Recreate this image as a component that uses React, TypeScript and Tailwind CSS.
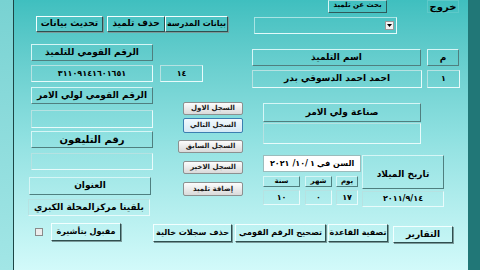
import React from "react";

// classic Access-form controls
const head =
  "flex items-center justify-center whitespace-nowrap border border-t-[#d6f6f6] border-l-[#d6f6f6] border-b-[#4f7f7f] border-r-[#4f7f7f] text-[9px] font-bold text-black";
const field =
  "flex items-center justify-center whitespace-nowrap border border-t-[#b6e2e2] border-l-[#b6e2e2] border-b-[#e8fbfb] border-r-[#e8fbfb] text-[9px] font-bold text-black";
const raised =
  "flex items-center justify-center whitespace-nowrap border border-t-[#f2ffff] border-l-[#f2ffff] border-b-[#2f4f4f] border-r-[#2f4f4f] shadow-[1px_1px_0_#7a9a9a] text-[9px] font-bold text-black";
const winBtn =
  "flex items-center justify-center whitespace-nowrap rounded-[2px] border border-[#8c9090] bg-gradient-to-b from-[#fcfcfc] to-[#dadada] text-[7px] font-bold text-[#1a1a1a]";
const winBtnFocus =
  "flex items-center justify-center whitespace-nowrap rounded-[2px] border border-[#3c7fb1] bg-gradient-to-b from-[#f2f9fd] to-[#d6e9f5] text-[7px] font-bold text-[#1a1a1a]";

const Field = ({ cls, w, h, children }: { cls: string; w: string; h: string; children?: React.ReactNode }) => (
  <div className={`${cls} ${w} ${h}`} dir="rtl">{children}</div>
);

const App = () => {
  return (
    <div
      dir="ltr"
      className="flex w-[480px] h-[270px] overflow-hidden"
      style={{ fontFamily: '"DejaVu Sans", "Liberation Sans", sans-serif' }}
    >
      {/* left strip */}
      <div className="w-[13px] h-full bg-gradient-to-b from-[#78d2d2] to-[#a2e6e6]" />
      <div className="w-[1px] h-full bg-[#1d4646]" />

      {/* form body */}
      <div className="w-[454px] h-full flex flex-col bg-gradient-to-b from-[#3fbfbf] via-[#8ee0e0] to-[#d2fafa]" dir="rtl">
        <div className="h-[222px] flex flex-row-reverse">
          {/* left column */}
          <div className="w-[229px] flex flex-col" dir="ltr">
            <div className="flex mt-[16px] ml-[22px]">
              <Field cls={raised} w="w-[67px]" h="h-[16px]">تحديث بيانات</Field>
              <div className="w-[4px]" />
              <Field cls={raised} w="w-[58px]" h="h-[16px]">حذف تلميذ</Field>
              <Field cls={raised} w="w-[63px]" h="h-[16px]"><span className="text-[8px]">بيانات المدرسة</span></Field>
            </div>
            <div className="mt-[12px] ml-[17px]">
              <Field cls={head} w="w-[122px]" h="h-[17px]">الرقم القومي للتلميذ</Field>
            </div>
            <div className="flex mt-[4px] ml-[17px]">
              <Field cls={field} w="w-[122px]" h="h-[17px]">
                <span className="tracking-[1px] text-[8px]">٣١١٠٩١٤١٦٠١٦٥١</span>
              </Field>
              <div className="w-[7px]" />
              <Field cls={field} w="w-[43px]" h="h-[17px]"><span className="text-[8px]">١٤</span></Field>
            </div>

            <div className="flex">
              <div className="w-[125px] ml-[14px] flex flex-col">
                <div className="mt-[5px] ml-[3px]">
                  <Field cls={head} w="w-[122px]" h="h-[17px]">الرقم القومي لولي الامر</Field>
                </div>
                <div className="mt-[6px] ml-[3px]">
                  <Field cls={field} w="w-[122px]" h="h-[18px]" />
                </div>
                <div className="mt-[3px] ml-[3px]">
                  <Field cls={head} w="w-[122px]" h="h-[17px]"><span className="text-[10px]">رقم التليفون</span></Field>
                </div>
                <div className="mt-[5px] ml-[3px]">
                  <Field cls={field} w="w-[122px]" h="h-[17px]" />
                </div>
                <div className="mt-[7px] ml-[1px]">
                  <Field cls={head} w="w-[122px]" h="h-[18px]">العنوان</Field>
                </div>
                <div className="mt-[4px]">
                  <Field cls={field} w="w-[122px]" h="h-[17px]">بلقينا مركزالمحلة الكبري</Field>
                </div>
              </div>

              <div className="w-[65px] ml-[25px] mt-[20px] flex flex-col items-end">
                <Field cls={winBtn} w="w-[60px]" h="h-[13px]">السجل الاول</Field>
                <div className="mt-[3px]">
                  <Field cls={winBtnFocus} w="w-[60px]" h="h-[15px]">السجل التالي</Field>
                </div>
                <div className="mt-[7px]">
                  <Field cls={winBtn} w="w-[65px]" h="h-[13px]">السجل السابق</Field>
                </div>
                <div className="mt-[8px]">
                  <Field cls={winBtn} w="w-[60px]" h="h-[13px]">السجل الاخير</Field>
                </div>
                <div className="mt-[8px]">
                  <Field cls={winBtn} w="w-[60px]" h="h-[14px]">إضافة تلميذ</Field>
                </div>
              </div>
            </div>
          </div>

          <div className="w-[9px]" />

          {/* right column */}
          <div className="w-[208px] flex flex-col" dir="ltr">
            <div className="flex h-[13px]">
              <div className="ml-[76px] w-[59px] h-[13px] flex items-start justify-center whitespace-nowrap border border-t-[#9fd9d9] border-l-[#d6f6f6] border-b-[#2f5a5a] border-r-[#2f5a5a] text-[7px] font-bold leading-[8px] overflow-hidden" dir="rtl">
                بحث عن تلميذ
              </div>
              <div className="ml-[40px] w-[32px] h-[13px] flex items-center justify-center whitespace-nowrap border border-[#5dc9c9] text-[10px] font-bold leading-none" dir="rtl">
                خروج
              </div>
            </div>

            <div className="mt-[4px] ml-[2px] w-[143px] h-[17px] border border-t-[#a8e4e4] border-l-[#a8e4e4] border-b-[#e2fafa] border-r-[#e2fafa] flex items-center justify-end pr-[2px]">
              <div className="w-[9px] h-[9px] bg-[#f4f4f4] border border-[#9a9a9a] flex items-center justify-center">
                <svg width="5" height="3" viewBox="0 0 5 3">
                  <path d="M0 0 L5 0 L2.5 3 Z" fill="#000" />
                </svg>
              </div>
            </div>

            <div className="flex mt-[15px]">
              <Field cls={head} w="w-[169px]" h="h-[17px]">اسم التلميذ</Field>
              <div className="w-[6px]" />
              <Field cls={head} w="w-[32px]" h="h-[17px]">م</Field>
            </div>
            <div className="flex mt-[4px]">
              <Field cls={field} w="w-[170px]" h="h-[18px]">احمد احمد الدسوقي بدر</Field>
              <div className="w-[5px]" />
              <Field cls={field} w="w-[33px]" h="h-[18px]"><span className="text-[8px]">١</span></Field>
            </div>

            <div className="mt-[15px] ml-[11px]">
              <Field cls={head} w="w-[158px]" h="h-[19px]">صناعة ولي الامر</Field>
            </div>
            <div className="mt-[1px] ml-[11px]">
              <Field cls={field} w="w-[158px]" h="h-[21px]" />
            </div>

            <div className="flex mt-[11px] ml-[11px]">
              <div className="w-[98px] flex flex-col">
                <div className="w-[98px] h-[17px] bg-white border border-[#9bbcbc] flex items-center justify-center whitespace-nowrap text-[8px] font-bold" dir="rtl">
                  السن في <bdi className="mx-[2px]">١</bdi>/<bdi>١٠</bdi>/ <bdi className="mr-[3px]">٢٠٢١</bdi>
                </div>
                <div className="flex mt-[4px]">
                  <Field cls={head} w="w-[37px]" h="h-[11px]"><span className="text-[7px]">سنة</span></Field>
                  <div className="w-[5px]" />
                  <Field cls={head} w="w-[27px]" h="h-[11px]"><span className="text-[7px]">شهر</span></Field>
                  <div className="w-[4px]" />
                  <Field cls={head} w="w-[22px]" h="h-[11px]"><span className="text-[7px]">يوم</span></Field>
                </div>
                <div className="flex mt-[3px]">
                  <Field cls={field} w="w-[37px]" h="h-[15px]"><span className="text-[8px]">١٠</span></Field>
                  <div className="w-[5px]" />
                  <Field cls={field} w="w-[27px]" h="h-[15px]"><span className="text-[8px]">٠</span></Field>
                  <div className="w-[4px]" />
                  <Field cls={field} w="w-[22px]" h="h-[15px]"><span className="text-[8px]">١٧</span></Field>
                </div>
              </div>
              <div className="ml-[1px] flex flex-col">
                <Field cls={head} w="w-[82px]" h="h-[34px]"><span className="mt-[6px]">تاريخ الميلاد</span></Field>
                <div className="mt-[2px]">
                  <Field cls={field} w="w-[82px]" h="h-[16px]"><span className="text-[8px] tracking-[1px]">٢٠١١/٩/١٤</span></Field>
                </div>
              </div>
            </div>
          </div>
        </div>

        {/* bottom buttons */}
        <div className="flex items-start mt-[1px]" dir="ltr">
          <div className="ml-[21px] mt-[5px] w-[8px] h-[8px] bg-[#ececec] border border-[#8a8a8a]" />
          <div className="ml-[8px]">
            <Field cls={raised} w="w-[70px]" h="h-[18px]"><span className="text-[8px]">مقبول بتأشيرة</span></Field>
          </div>
          <div className="ml-[32px] mt-[1px]">
            <Field cls={raised} w="w-[79px]" h="h-[18px]"><span className="text-[8px]">حذف سجلات خالية</span></Field>
          </div>
          <div className="ml-[3px] mt-[1px]">
            <Field cls={raised} w="w-[91px]" h="h-[18px]"><span className="text-[8px]">تصحيح الرقم القومي</span></Field>
          </div>
          <div className="ml-[2px] mt-[1px]">
            <Field cls={raised} w="w-[60px]" h="h-[18px]"><span className="text-[8px]">تصفية القاعدة</span></Field>
          </div>
          <div className="ml-[5px] mt-[3px]">
            <Field cls={raised} w="w-[60px]" h="h-[17px]">التقارير</Field>
          </div>
        </div>
      </div>

      {/* right strip */}
      <div className="w-[12px] h-full bg-[#217777]" />
    </div>
  );
};

export default App;
